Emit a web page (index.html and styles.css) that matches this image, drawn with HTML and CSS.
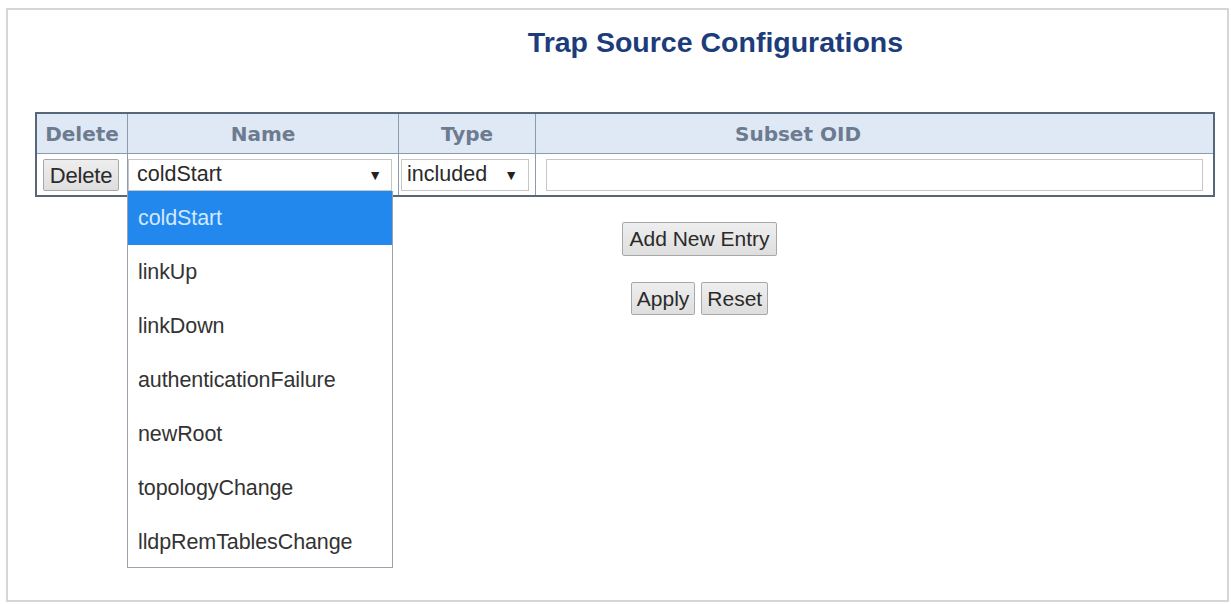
FILE: index.html
```html
<!DOCTYPE html>
<html>
<head>
<meta charset="utf-8">
<link rel="stylesheet" href="styles.css">
</head>
<body>
<div class="panel">
  <h1 class="title">Trap Source Configurations</h1>
  <div class="tablewrap">
    <table class="config">
      <thead>
        <tr>
          <th class="c-del">Delete</th>
          <th class="c-name">Name</th>
          <th class="c-type">Type</th>
          <th class="c-oid">Subset OID</th>
        </tr>
      </thead>
      <tbody>
        <tr>
          <td class="c-del"><span class="btn btn-del">Delete</span></td>
          <td class="c-name"><div class="sel sel-name"><span>coldStart</span><span class="arrow">▼</span></div></td>
          <td class="c-type"><div class="sel sel-type"><span>included</span><span class="arrow">▼</span></div></td>
          <td class="c-oid"><div class="input"></div></td>
        </tr>
      </tbody>
    </table>
    <ul class="dropdown">
      <li class="active">coldStart</li>
      <li>linkUp</li>
      <li>linkDown</li>
      <li>authenticationFailure</li>
      <li>newRoot</li>
      <li>topologyChange</li>
      <li>lldpRemTablesChange</li>
    </ul>
  </div>
  <div class="actions">
    <div class="row1"><span class="btn">Add New Entry</span></div>
    <div class="row2"><span class="btn">Apply</span><span class="btn">Reset</span></div>
  </div>
</div>
</body>
</html>
```

FILE: styles.css
```css
html, body {
  margin: 0;
  padding: 0;
  background: #ffffff;
}
body {
  font-family: "Liberation Sans", Arial, sans-serif;
  color: #222;
}
.panel {
  margin: 8px 2px 2px 6px;
  border: 2px solid #d6d6d6;
  box-sizing: border-box;
  height: 594px;
}
.title {
  margin: 0;
  padding: 15px 0 0 196px;
  text-align: center;
  font-size: 28.5px;
  line-height: 34px;
  font-weight: bold;
  color: #1d3c7c;
}
.tablewrap {
  position: relative;
  margin: 53px 0 0 27px;
  width: 1180px;
}
.config {
  width: 1180px;
  border-collapse: collapse;
  border: 2px solid #56677a;
  table-layout: fixed;
}
.config th, .config td {
  border: 1px solid #8d9bad;
  padding: 0;
}
.config th {
  background: #dfe8f5;
  height: 39px;
  font-family: "DejaVu Sans", Verdana, sans-serif;
  font-size: 20px;
  font-weight: bold;
  color: #6d7b90;
}
.config th.c-oid {
  text-align: left;
  padding-left: 199px;
}
.config td {
  height: 41px;
  background: #fff;
}
.c-del { width: 90px; }
.c-name { width: 270px; }
.c-type { width: 136px; }
.config td.c-del { padding-left: 6px; }
.btn {
  display: inline-block;
  background: linear-gradient(#eeeeee, #dedede);
  border: 1px solid #a8a8a8;
  border-radius: 2px;
  font-family: "Liberation Sans", Arial, sans-serif;
  font-size: 21px;
  line-height: 31px;
  padding: 0 3px;
  color: #2a2a2a;
  box-sizing: border-box;
}
.btn-del {
  height: 32px;
  width: 76px;
  text-align: center;
  padding: 0;
  font-size: 22px;
  letter-spacing: -0.2px;
}
.sel {
  display: flex;
  justify-content: space-between;
  align-items: center;
  height: 32px;
  border: 1px solid #c6c6c6;
  background: #fff;
  box-sizing: border-box;
  font-size: 21.5px;
  color: #2a2a2a;
  padding: 0 9px 0 8px;
}
.sel-name { width: 264px; }
.sel-type { width: 128px; margin-left: 2px; padding-left: 5px; padding-right: 10px; }
.arrow {
  font-size: 14px;
  color: #222;
}
.input {
  height: 30px;
  margin: 0 10px 0 10px;
  border: 1px solid #c8c8c8;
  background: #fff;
}
.dropdown {
  position: absolute;
  left: 92px;
  top: 79px;
  width: 266px;
  height: 377px;
  margin: 0;
  padding: 0;
  list-style: none;
  background: #fff;
  border: 1px solid #9aa3ad;
  border-top: none;
  box-sizing: border-box;
}
.dropdown li {
  height: 54px;
  line-height: 54px;
  padding-left: 10px;
  font-size: 21.5px;
  color: #333;
  letter-spacing: -0.1px;
}
.dropdown li.active {
  background: #2288ee;
  color: #d2e8ff;
}
.actions {
  padding-left: 164px;
  text-align: center;
}
.row1 {
  margin-top: 25px;
  line-height: 0;
}
.row1 .btn {
  height: 34px;
  line-height: 32px;
  padding: 0 6px;
}
.row2 {
  margin-top: 26px;
  line-height: 0;
}
.row2 .btn {
  height: 33px;
  line-height: 31px;
  margin: 0 3px;
  padding: 0 5px;
}
```
